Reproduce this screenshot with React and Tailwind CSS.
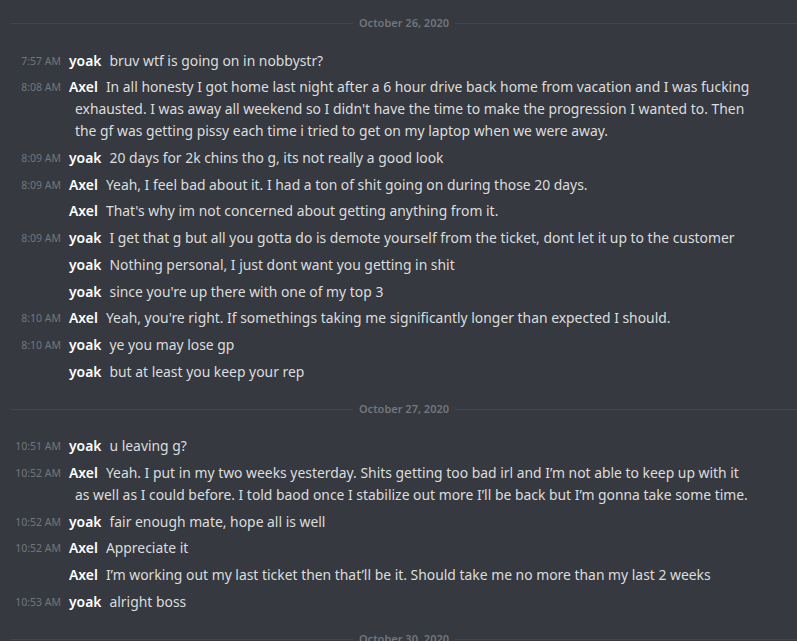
const days = [
  {
    date: "October 26, 2020",
    messages: [
      { time: "7:57 AM", name: "yoak", text: "bruv wtf is going on in nobbystr?" },
      {
        time: "8:08 AM",
        name: "Axel",
        text:
          "In all honesty I got home last night after a 6 hour drive back home from vacation and I was fucking exhausted. I was away all weekend so I didn't have the time to make the progression I wanted to. Then the gf was getting pissy each time i tried to get on my laptop when we were away.",
      },
      { time: "8:09 AM", name: "yoak", text: "20 days for 2k chins tho g, its not really a good look" },
      { time: "8:09 AM", name: "Axel", text: "Yeah, I feel bad about it. I had a ton of shit going on during those 20 days." },
      { name: "Axel", text: "That's why im not concerned about getting anything from it." },
      { time: "8:09 AM", name: "yoak", text: "I get that g but all you gotta do is demote yourself from the ticket, dont let it up to the customer" },
      { name: "yoak", text: "Nothing personal, I just dont want you getting in shit" },
      { name: "yoak", text: "since you're up there with one of my top 3" },
      { time: "8:10 AM", name: "Axel", text: "Yeah, you're right. If somethings taking me significantly longer than expected I should." },
      { time: "8:10 AM", name: "yoak", text: "ye you may lose gp" },
      { name: "yoak", text: "but at least you keep your rep" },
    ],
  },
  {
    date: "October 27, 2020",
    messages: [
      { time: "10:51 AM", name: "yoak", text: "u leaving g?" },
      {
        time: "10:52 AM",
        name: "Axel",
        text:
          "Yeah. I put in my two weeks yesterday. Shits getting too bad irl and I\u2019m not able to keep up with it as well as I could before. I told baod once I stabilize out more I\u2019ll be back but I\u2019m gonna take some time.",
      },
      { time: "10:52 AM", name: "yoak", text: "fair enough mate, hope all is well" },
      { time: "10:52 AM", name: "Axel", text: "Appreciate it" },
      { name: "Axel", text: "I\u2019m working out my last ticket then that\u2019ll be it. Should take me no more than my last 2 weeks" },
      { time: "10:53 AM", name: "yoak", text: "alright boss" },
    ],
  },
  { date: "October 30, 2020", messages: [] },
];

function Divider({ date }) {
  return (
    <div className="relative h-px bg-[#42454a] ml-[11px] mt-[26px] mb-[21px]">
      <div className="absolute left-0 right-0 -top-[8px] flex justify-center">
        <span className="bg-[#36393f] px-[6px] text-[11px] leading-[16px] font-semibold text-[#72767d]">
          {date}
        </span>
      </div>
    </div>
  );
}

function Message({ time, name, text }) {
  return (
    <div className="pt-[4.7px] pl-[75px] pr-[44px] -indent-[64px] leading-[22px] text-[13.9px] text-[#dcddde]">
      <span className="inline-block align-top h-[22px] w-[50px] indent-0 text-right text-[10.5px] leading-[22px] text-[#72767d] mr-[8px]">
        {time || ""}
      </span>
      <span className="font-semibold text-white mr-[8px]">{name}</span>
      <span>{text}</span>
    </div>
  );
}

export default function App() {
  return (
    <div
      className="w-[797px] h-[641px] overflow-hidden bg-[#36393f] pt-[23px]"
      style={{ fontFamily: '"Noto Sans", "Open Sans", sans-serif' }}
    >
      {days.map((day, d) => (
        <div key={day.date} className={d === 0 ? "-mt-[26px]" : ""}>
          <Divider date={day.date} />
          {day.messages.map((m, i) => (
            <Message key={i} {...m} />
          ))}
        </div>
      ))}
    </div>
  );
}
